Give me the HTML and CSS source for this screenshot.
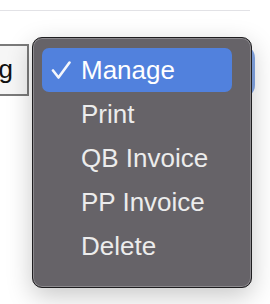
FILE: index.html
```html
<!DOCTYPE html>
<html>
<head>
<meta charset="utf-8">
<link rel="stylesheet" href="styles.css">
</head>
<body>
  <div class="rule"></div>
  <div class="row">
    <div class="field">Pending</div>
    <div class="select"></div>
  </div>
  <div class="menu">
    <div class="item selected">
      <span class="mark"><svg width="20" height="18" viewBox="0 0 20 18"><path d="M2 9.5 L7.5 16.5 L18.5 1.5" fill="none" stroke="#f4f6fb" stroke-width="2.6" stroke-linecap="round" stroke-linejoin="round"/></svg></span>
      <span class="label">Manage</span>
    </div>
    <div class="item"><span class="mark"></span><span class="label">Print</span></div>
    <div class="item"><span class="mark"></span><span class="label">QB Invoice</span></div>
    <div class="item"><span class="mark"></span><span class="label">PP Invoice</span></div>
    <div class="item"><span class="mark"></span><span class="label">Delete</span></div>
  </div>
</body>
</html>
```
FILE: styles.css
```css
html, body {
  margin: 0;
  padding: 0;
  background: #ffffff;
  font-family: "Liberation Sans", Arial, sans-serif;
}
.rule {
  margin-top: 10px;
  width: 250px;
  height: 1px;
  background: #e2e2e6;
}
.row {
  margin-top: 33px;
  display: flex;
  align-items: center;
}
.field {
  margin-left: -90px;
  width: 101px;
  height: 48px;
  border: 2px solid #7a7a7a;
  background: #f6f6f6;
  font-size: 26px;
  line-height: 46px;
  text-align: right;
  padding-right: 14px;
  box-sizing: content-box;
  color: #111;
  overflow: hidden;
  white-space: nowrap;
}
.select {
  margin-left: 10px;
  margin-top: 2px;
  width: 207px;
  height: 39px;
  border: 2px solid #5a5a5a;
  border-radius: 8px;
  background: #9b9b9b;
  box-shadow: 0 0 0 5px #84a7e6;
}
.menu {
  position: absolute;
  left: 32px;
  top: 37px;
  width: 209px;
  height: 239px;
  box-sizing: content-box;
  background: #666368;
  border: 1px solid #1f1e20;
  border-radius: 10px;
  box-shadow: inset 0 0 0 1px #8c8a8e, 0 8px 26px rgba(0, 0, 0, 0.22);
  display: flex;
  flex-direction: column;
  padding-top: 10px;
  padding-left: 9px;
}
.item {
  width: 190px;
  height: 44px;
  display: flex;
  align-items: center;
  border-radius: 7px;
  color: #ececec;
  font-size: 26px;
  line-height: 44px;
}
.item.selected {
  background: #5181dd;
  color: #ffffff;
}
.mark {
  width: 39px;
  height: 44px;
  flex: none;
  display: flex;
  align-items: center;
  justify-content: flex-start;
  padding-left: 9px;
  box-sizing: border-box;
}
.mark svg {
  display: block;
  margin-top: -1px;
}
```
